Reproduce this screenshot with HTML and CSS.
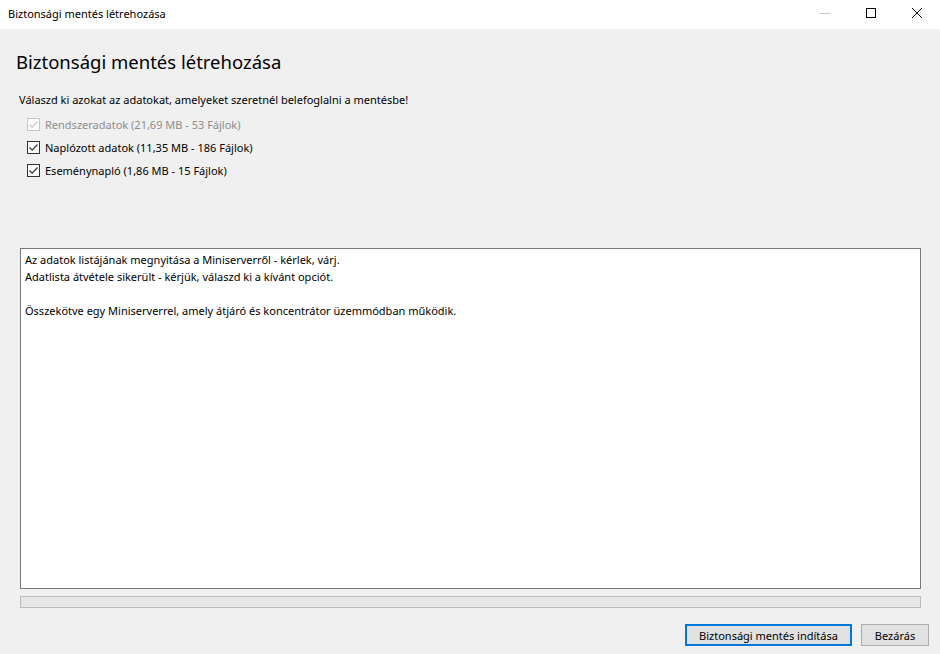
FILE: index.html
```html
<!DOCTYPE html>
<html lang="hu">
<head>
<meta charset="utf-8">
<title>Biztonsági mentés létrehozása</title>
<link rel="stylesheet" href="styles.css">
</head>
<body>
<div class="window">
  <div class="titlebar">
    <div class="title">Biztonsági mentés létrehozása</div>
    <div class="controls">
      <div class="ctl">
        <svg width="10" height="10" viewBox="0 0 10 10"><line x1="0" y1="5.5" x2="10" y2="5.5" stroke="#c4c4c4" stroke-width="1"/></svg>
      </div>
      <div class="ctl">
        <svg width="10" height="10" viewBox="0 0 10 10"><rect x="0.5" y="0.5" width="9" height="9" fill="none" stroke="#000" stroke-width="1"/></svg>
      </div>
      <div class="ctl">
        <svg width="10" height="10" viewBox="0 0 10 10"><path d="M0 0L10 10M10 0L0 10" stroke="#000" stroke-width="1"/></svg>
      </div>
    </div>
  </div>
  <div class="content">
    <h1 class="heading">Biztonsági mentés létrehozása</h1>
    <p class="prompt">Válaszd ki azokat az adatokat, amelyeket szeretnél belefoglalni a mentésbe!</p>
    <ul class="options">
      <li class="option disabled">
        <span class="box"><svg width="11" height="11" viewBox="0 0 11 11"><path d="M1.5 5.5L4.2 8.2L9.5 2.5" fill="none" stroke="#c4c4c4" stroke-width="1.2"/></svg></span>
        <span>Rendszeradatok (21,69 MB - 53 Fájlok)</span>
      </li>
      <li class="option">
        <span class="box"><svg width="11" height="11" viewBox="0 0 11 11"><path d="M1.5 5.5L4.2 8.2L9.5 2.5" fill="none" stroke="#333" stroke-width="1.2"/></svg></span>
        <span>Naplózott adatok (11,35 MB - 186 Fájlok)</span>
      </li>
      <li class="option">
        <span class="box"><svg width="11" height="11" viewBox="0 0 11 11"><path d="M1.5 5.5L4.2 8.2L9.5 2.5" fill="none" stroke="#333" stroke-width="1.2"/></svg></span>
        <span>Eseménynapló (1,86 MB - 15 Fájlok)</span>
      </li>
    </ul>
    <div class="log">
      <div>Az adatok listájának megnyitása a Miniserverről - kérlek, várj.</div>
      <div>Adatlista átvétele sikerült - kérjük, válaszd ki a kívánt opciót.</div>
      <div>&nbsp;</div>
      <div>Összekötve egy Miniserverrel, amely átjáró és koncentrátor üzemmódban működik.</div>
    </div>
    <div class="progress"></div>
    <div class="buttons">
      <button class="btn primary">Biztonsági mentés indítása</button>
      <button class="btn">Bezárás</button>
    </div>
  </div>
</div>
</body>
</html>
```

FILE: styles.css
```css
html, body {
  margin: 0;
  padding: 0;
}
body {
  width: 940px;
  height: 654px;
  overflow: hidden;
  background: #f0f0f0;
  font-family: "Noto Sans", "Open Sans", sans-serif;
  font-size: 11px;
  color: #000;
}
.window {
  display: flex;
  flex-direction: column;
  height: 654px;
}
.titlebar {
  height: 29px;
  background: #fff;
  display: flex;
  align-items: center;
  justify-content: space-between;
}
.title {
  padding-left: 8px;
  padding-bottom: 2px;
  font-size: 11px;
}
.controls {
  display: flex;
  height: 29px;
}
.ctl {
  width: 46px;
  height: 29px;
  display: flex;
  align-items: center;
  justify-content: center;
  padding-bottom: 3px;
  box-sizing: border-box;
}
.content {
  flex: 1;
  display: flex;
  flex-direction: column;
  padding: 0 11px 0 20px;
}
.heading {
  margin: 19px 0 0 -4px;
  font-size: 18.5px;
  font-weight: normal;
  line-height: 28px;
  height: 28px;
}
.prompt {
  margin: 16px 0 0 -1px;
  line-height: 16px;
}
.options {
  list-style: none;
  margin: 8px 0 0 7px;
  padding: 0;
  display: flex;
  flex-direction: column;
  gap: 7px;
}
.option {
  display: flex;
  align-items: center;
  gap: 5px;
  height: 16px;
}
.box {
  width: 13px;
  height: 13px;
  box-sizing: border-box;
  border: 1px solid #333;
  background: #fff;
  display: flex;
  align-items: center;
  justify-content: center;
}
.option.disabled {
  color: #8d8d8d;
}
.option.disabled .box {
  border-color: #c4c4c4;
}
.log {
  margin-top: 70px;
  margin-right: 8px;
  height: 341px;
  box-sizing: border-box;
  border: 1px solid #7a7a7a;
  background: #fff;
  padding: 2px 4px;
  line-height: 17px;
}
.progress {
  margin-top: 7px;
  margin-right: 8px;
  height: 12px;
  box-sizing: border-box;
  border: 1px solid #bcbcbc;
  background: #e6e6e6;
}
.buttons {
  margin-top: 16px;
  display: flex;
  justify-content: flex-end;
  gap: 9px;
}
.btn {
  height: 22px;
  box-sizing: border-box;
  border: 1px solid #adadad;
  background: #e1e1e1;
  font-family: inherit;
  font-size: 11px;
  padding: 0;
  color: #000;
  width: 68px;
}
.btn.primary {
  border: 2px solid #0078d7;
  width: 167px;
}
```
